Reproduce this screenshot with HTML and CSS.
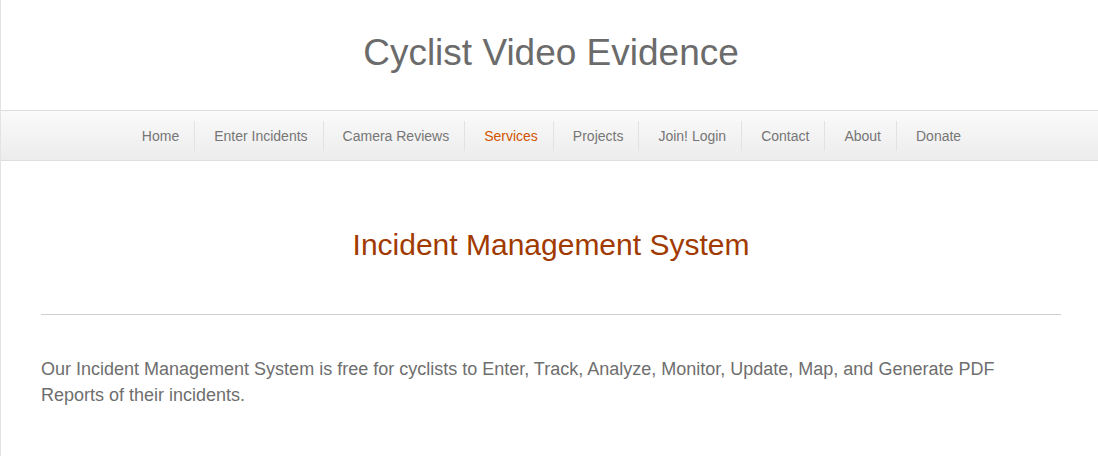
FILE: index.html
```html
<!DOCTYPE html>
<html lang="en">
<head>
<meta charset="utf-8">
<title>Cyclist Video Evidence</title>
<link rel="stylesheet" href="styles.css">
</head>
<body>
<div class="page">
  <header class="site-header">
    <h1 class="site-title">Cyclist Video Evidence</h1>
  </header>
  <nav class="main-nav">
    <ul class="nav-list">
      <li class="nav-item"><a href="#">Home</a></li>
      <li class="nav-item"><a href="#">Enter Incidents</a></li>
      <li class="nav-item"><a href="#">Camera Reviews</a></li>
      <li class="nav-item active"><a href="#">Services</a></li>
      <li class="nav-item"><a href="#">Projects</a></li>
      <li class="nav-item"><a href="#">Join! Login</a></li>
      <li class="nav-item"><a href="#">Contact</a></li>
      <li class="nav-item"><a href="#">About</a></li>
      <li class="nav-item"><a href="#">Donate</a></li>
    </ul>
  </nav>
  <main class="content">
    <h2 class="page-title">Incident Management System</h2>
    <hr class="divider">
    <p class="intro">Our Incident Management System is free for cyclists to Enter, Track, Analyze, Monitor, Update, Map, and Generate PDF Reports of their incidents.</p>
  </main>
</div>
</body>
</html>
```

FILE: styles.css
```css
html, body {
  margin: 0;
  padding: 0;
  background: #ffffff;
  overflow: hidden;
}

body {
  font-family: "Liberation Sans", Arial, sans-serif;
}

.page {
  width: 1100px;
  min-height: 456px;
  border-left: 1px solid #e3e3e3;
  border-right: 1px solid #e3e3e3;
}

.site-header {
  height: 110px;
  box-sizing: border-box;
  padding-top: 35px;
}

.site-title {
  margin: 0;
  text-align: center;
  font-size: 37px;
  line-height: 36px;
  font-weight: normal;
  color: #6b6b6b;
}

.main-nav {
  height: 49px;
  border-top: 1px solid #dedede;
  border-bottom: 1px solid #dedede;
  background: linear-gradient(to bottom, #fafafa, #ececec);
  display: flex;
  justify-content: center;
  align-items: center;
}

.nav-list {
  list-style: none;
  margin: 0 4px 0 0;
  padding: 0;
  display: flex;
  align-items: center;
}

.nav-item {
  padding: 0 15px 0 19px;
  height: 30px;
  display: flex;
  align-items: center;
  border-left: 1px solid #e2e2e2;
}

.nav-item:first-child {
  border-left: none;
  padding-left: 20px;
}

.nav-item a {
  font-size: 14px;
  color: #767676;
  text-decoration: none;
}

.nav-item.active a {
  color: #d35400;
}

.content {
  padding: 0 40px;
}

.page-title {
  margin: 0;
  padding-top: 66px;
  text-align: center;
  font-size: 30px;
  line-height: 36px;
  font-weight: normal;
  color: #a13a00;
}

.divider {
  margin: 51px 0 0;
  border: none;
  border-top: 1px solid #d0d0d0;
  height: 0;
}

.intro {
  margin: 41px 0 0;
  font-size: 18px;
  line-height: 26px;
  color: #6e6e6e;
}
```
